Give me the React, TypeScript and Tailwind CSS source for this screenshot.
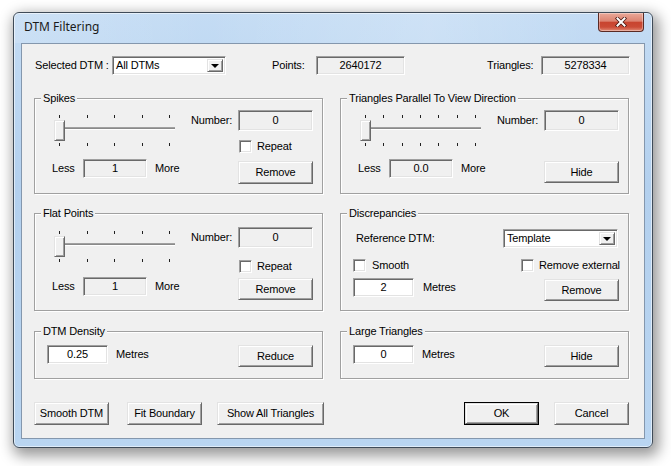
import React from "react";

const raised =
  "border border-t-[#e3e3e3] border-l-[#e3e3e3] border-b-[#696969] border-r-[#696969] shadow-[inset_1px_1px_0_#fff,inset_-1px_-1px_0_#a0a0a0] bg-[#f0f0f0]";
const sunken =
  "border border-t-[#a0a0a0] border-l-[#a0a0a0] border-b-white border-r-white shadow-[inset_1px_1px_0_#696969,inset_-1px_-1px_0_#e3e3e3]";

function Btn({
  children,
  w = "w-[75px]",
  h = "h-[23px]",
  className = "",
}: {
  children: React.ReactNode;
  w?: string;
  h?: string;
  className?: string;
}) {
  return (
    <div className={`${w} ${h} ${raised} shrink-0 flex items-center justify-center leading-[13px] ${className}`}>
      {children}
    </div>
  );
}

function Field({
  value,
  w,
  h = "h-[19px]",
  white = false,
}: {
  value: string;
  w: string;
  h?: string;
  white?: boolean;
}) {
  return (
    <div
      className={`${w} ${h} ${sunken} ${white ? "bg-white" : "bg-[#f0f0f0]"} shrink-0 flex items-center justify-center leading-[13px]`}
    >
      {value}
    </div>
  );
}

function Check() {
  return <div className={`w-[13px] h-[13px] bg-white shrink-0 ${sunken}`} />;
}

function Combo({ value, w }: { value: string; w: string }) {
  return (
    <div className={`${w} h-[19px] bg-white shrink-0 ${sunken} flex items-stretch p-[2px]`}>
      <div className="flex-1 flex items-center pl-[1px] leading-[13px]">{value}</div>
      <div className={`w-[16px] ${raised} flex items-center justify-center`}>
        <div className="w-0 h-0 border-x-[4px] border-x-transparent border-t-[4px] border-t-black" />
      </div>
    </div>
  );
}

function Ticks({ n }: { n: number }) {
  return (
    <div className="h-[3px] px-[5px] flex justify-between">
      {Array.from({ length: n }).map((_, i) => (
        <div key={i} className="w-px h-[3px] bg-[#202020]" />
      ))}
    </div>
  );
}

function Slider({ ticks }: { ticks: number }) {
  return (
    <div className="w-[121px] flex flex-col">
      <Ticks n={ticks} />
      <div className="relative h-[21px] mt-[2px]">
        <div className="mt-[7px] w-full h-[3px] border-t border-t-[#a0a0a0] border-b border-b-white bg-[#8a8a8a]" />
        <div className={`absolute left-0 top-0 w-[11px] h-[21px] ${raised}`} />
      </div>
      <div className="mt-[2px]">
        <Ticks n={ticks} />
      </div>
    </div>
  );
}

function Group({
  title,
  className = "",
  children,
}: {
  title: string;
  className?: string;
  children: React.ReactNode;
}) {
  return (
    <div
      className={`w-[289px] border border-[#a0a0a0] shadow-[inset_1px_1px_0_#fff,1px_1px_0_#fff] flex flex-col ${className}`}
    >
      <div className="-mt-[7px] ml-[6px] px-[2px] self-start bg-[#f0f0f0] leading-[13px] h-[13px]">
        {title}
      </div>
      {children}
    </div>
  );
}

type V = { slider: string; less: string; number: string; check: string; button: string };

function SliderGroup({
  title,
  ticks,
  less,
  check,
  button,
  buttonH,
  v,
  className,
}: {
  title: string;
  ticks: number;
  less: string;
  check: boolean;
  button: string;
  buttonH: string;
  v: V;
  className: string;
}) {
  return (
    <Group title={title} className={className}>
      <div className="flex">
        <div className="w-[156px] pl-[17px] flex flex-col">
          <div className={`${v.slider} ml-[2px]`}>
            <Slider ticks={ticks} />
          </div>
          <div className={`${v.less} flex items-center h-[19px]`}>
            <span className="w-[31px]">Less</span>
            <Field value={less} w="w-[64px]" />
            <span className="ml-[8px]">More</span>
          </div>
        </div>
        <div className="flex flex-col">
          <div className={`${v.number} flex items-center`}>
            <span className="w-[47px]">Number:</span>
            <Field value="0" w="w-[75px]" h="h-[21px]" />
          </div>
          {check && (
            <div className={`${v.check} pl-[48px] flex items-center h-[13px]`}>
              <Check />
              <span className="ml-[5px] leading-[13px]">Repeat</span>
            </div>
          )}
          <div className={`${v.button} ml-[47px]`}>
            <Btn h={buttonH}>{button}</Btn>
          </div>
        </div>
      </div>
    </Group>
  );
}

function MetresGroup({ title, value, button }: { title: string; value: string; button: string }) {
  return (
    <Group title={title} className="h-[48px]">
      <div className="mt-[7px] pl-[12px] flex items-start">
        <Field value={value} w="w-[61px]" white />
        <span className="ml-[8px] w-[122px] leading-[19px]">Metres</span>
        <Btn h="h-[22px]">{button}</Btn>
      </div>
    </Group>
  );
}

export default function App() {
  return (
    <div className="w-[671px] h-[466px] bg-white pt-[12px] pl-[13px] font-['Liberation_Sans',Arial,sans-serif] text-[11px] tracking-[-0.15px] text-black overflow-hidden">
      <div className="w-[640px] h-[436px] rounded-[6px] border border-[#3f4b58] bg-[linear-gradient(to_bottom,#c4dcf4,#b3d0ee_40%,#b9d5f1)] shadow-[3px_5px_14px_3px_rgba(0,0,0,0.4),inset_0_0_0_1px_rgba(255,255,255,0.55)] flex flex-col">
        <div className="h-[30px] flex items-start justify-between bg-[linear-gradient(to_right,rgba(255,255,255,0.15),rgba(255,255,255,0)_30%,rgba(255,255,255,0.18)_65%,rgba(255,255,255,0)_90%)] rounded-t-[5px]">
          <div className="pl-[10px] mt-[6px] leading-[16px] text-[12px] tracking-normal font-['Noto_Sans','Open_Sans',sans-serif] text-[#1b1b1b]">
            DTM Filtering
          </div>
          <div className="mr-[8px] w-[46px] h-[19px] rounded-b-[4px] border border-t-0 border-[#5a2a24] bg-[linear-gradient(to_bottom,#eaa999_0%,#dc8371_45%,#c8442f_52%,#cb4b36_78%,#e18b76_100%)] shadow-[inset_0_0_0_1px_rgba(255,255,255,0.35)] flex items-center justify-center">
            <svg width="12" height="10" viewBox="0 0 12 10">
              <path d="M2.5 1.5 L9.5 8.5 M9.5 1.5 L2.5 8.5" stroke="#4a1710" strokeWidth="3.6" strokeLinecap="square" />
              <path d="M2.5 1.5 L9.5 8.5 M9.5 1.5 L2.5 8.5" stroke="#ffffff" strokeWidth="2" strokeLinecap="square" />
            </svg>
          </div>
        </div>
        <div className="mx-[7px] w-[624px] h-[396px] border border-[#8497ad] bg-[#f0f0f0] flex flex-col pt-[12px] pl-[12px]">
          <div className="h-[19px] flex items-center">
            <span className="w-[78px] pl-[1px]">Selected DTM :</span>
            <Combo value="All DTMs" w="w-[114px]" />
            <span className="ml-[46px] w-[44px]">Points:</span>
            <Field value="2640172" w="w-[89px]" />
            <span className="ml-[82px] w-[54px]">Triangles:</span>
            <Field value="5278334" w="w-[89px]" />
          </div>

          <div className="mt-[23px] flex gap-[17px]">
            <SliderGroup
              title="Spikes"
              ticks={5}
              less="1"
              check
              button="Remove"
              buttonH="h-[23px]"
              className="h-[96px]"
              v={{ slider: "mt-[10px]", less: "mt-[13px]", number: "mt-[5px]", check: "mt-[9px]", button: "mt-[8px]" }}
            />
            <SliderGroup
              title="Triangles Parallel To View Direction"
              ticks={7}
              less="0.0"
              check={false}
              button="Hide"
              buttonH="h-[22px]"
              className="h-[96px]"
              v={{ slider: "mt-[10px]", less: "mt-[13px]", number: "mt-[5px]", check: "mt-[9px]", button: "mt-[30px]" }}
            />
          </div>

          <div className="mt-[19px] flex gap-[17px]">
            <SliderGroup
              title="Flat Points"
              ticks={5}
              less="1"
              check
              button="Remove"
              buttonH="h-[22px]"
              className="h-[98px]"
              v={{ slider: "mt-[11px]", less: "mt-[15px]", number: "mt-[7px]", check: "mt-[12px]", button: "mt-[5px]" }}
            />
            <Group title="Discrepancies" className="h-[98px]">
              <div className="mt-[9px] pl-[15px] flex items-center h-[19px]">
                <span className="w-[147px]">Reference DTM:</span>
                <Combo value="Template" w="w-[115px]" />
              </div>
              <div className="mt-[11px] pl-[12px] flex items-center h-[13px]">
                <Check />
                <span className="ml-[6px] w-[149px] leading-[13px]">Smooth</span>
                <Check />
                <span className="ml-[5px] leading-[13px]">Remove external</span>
              </div>
              <div className="mt-[6px] pl-[12px] flex items-start">
                <Field value="2" w="w-[61px]" white />
                <span className="ml-[9px] w-[121px] leading-[19px]">Metres</span>
                <Btn h="h-[22px]" className="mt-[1px]">
                  Remove
                </Btn>
              </div>
            </Group>
          </div>

          <div className="mt-[20px] flex gap-[17px]">
            <MetresGroup title="DTM Density" value="0.25" button="Reduce" />
            <MetresGroup title="Large Triangles" value="0" button="Hide" />
          </div>

          <div className="mt-[23px] w-[595px] flex justify-between">
            <div className="flex">
              <Btn>Smooth DTM</Btn>
              <Btn className="ml-[18px]">Fit Boundary</Btn>
              <Btn w="w-[107px]" className="ml-[15px]">
                Show All Triangles
              </Btn>
            </div>
            <div className="flex">
              <div className="w-[75px] h-[23px] border border-black flex">
                <div className={`flex-1 ${raised} flex items-center justify-center leading-[13px]`}>OK</div>
              </div>
              <Btn className="ml-[15px]">Cancel</Btn>
            </div>
          </div>
        </div>
      </div>
    </div>
  );
}
